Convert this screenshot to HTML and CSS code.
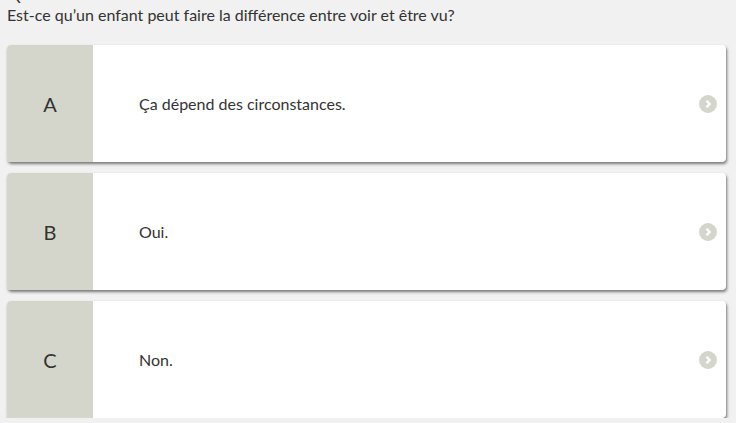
FILE: index.html
```html
<!DOCTYPE html>
<html lang="fr">
<head>
<meta charset="utf-8">
<link rel="stylesheet" href="styles.css">
</head>
<body>
<div class="page">
  <div class="qnum"><div class="qnum-inner">Q</div></div>
  <p class="question">Est-ce qu’un enfant peut faire la différence entre voir et être vu?</p>
  <div class="answers">
    <div class="card">
      <div class="letter">A</div>
      <div class="text">Ça dépend des circonstances.</div>
      <div class="go"><svg viewBox="0 0 18 18" width="18" height="18"><circle cx="9" cy="9" r="9" fill="#d4d6cc"/><path d="M7.4 5.6 L10.6 9 L7.4 12.4" fill="none" stroke="#fff" stroke-width="2.4"/></svg></div>
    </div>
    <div class="card">
      <div class="letter">B</div>
      <div class="text">Oui.</div>
      <div class="go"><svg viewBox="0 0 18 18" width="18" height="18"><circle cx="9" cy="9" r="9" fill="#d4d6cc"/><path d="M7.4 5.6 L10.6 9 L7.4 12.4" fill="none" stroke="#fff" stroke-width="2.4"/></svg></div>
    </div>
    <div class="card">
      <div class="letter">C</div>
      <div class="text">Non.</div>
      <div class="go"><svg viewBox="0 0 18 18" width="18" height="18"><circle cx="9" cy="9" r="9" fill="#d4d6cc"/><path d="M7.4 5.6 L10.6 9 L7.4 12.4" fill="none" stroke="#fff" stroke-width="2.4"/></svg></div>
    </div>
  </div>
</div>
</body>
</html>
```
FILE: styles.css
```css
html, body {
  margin: 0;
  padding: 0;
  background: #f1f1f1;
  font-family: Lato, "Open Sans", sans-serif;
  color: #333;
  overflow: hidden;
}
.page {
  padding: 0 10px 0 7px;
}
.qnum {
  height: 3px;
  overflow: hidden;
}
.qnum-inner {
  font-size: 16px;
  line-height: 20px;
  margin-top: -16px;
  padding-left: 1px;
}
.question {
  margin: 2px 0 0;
  font-size: 16px;
  line-height: 20px;
}
.answers {
  display: flex;
  flex-direction: column;
  gap: 11px;
  margin-top: 20px;
}
.card {
  display: flex;
  align-items: center;
  height: 117px;
  background: #fff;
  border-radius: 4px;
  box-shadow: 1px 2px 3px rgba(0,0,0,0.5);
  overflow: hidden;
}
.letter {
  width: 86px;
  align-self: stretch;
  background: #d4d6cc;
  display: flex;
  align-items: center;
  justify-content: center;
  font-size: 20px;
  color: #333;
}
.text {
  flex: 1;
  padding-left: 46px;
  font-size: 16px;
  color: #333;
}
.go {
  width: 18px;
  height: 18px;
  margin-right: 9px;
}
.go svg { display: block; }
```
